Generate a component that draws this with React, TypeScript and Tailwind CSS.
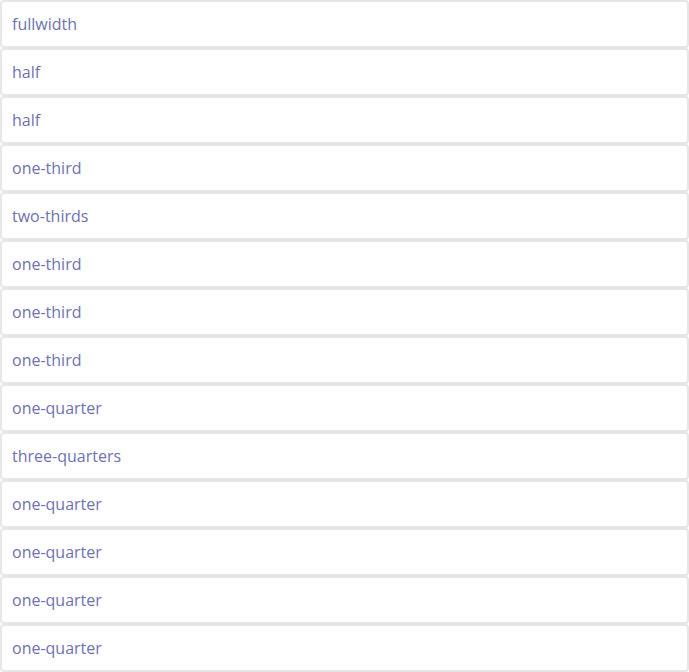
const rows = [
  "fullwidth",
  "half",
  "half",
  "one-third",
  "two-thirds",
  "one-third",
  "one-third",
  "one-third",
  "one-quarter",
  "three-quarters",
  "one-quarter",
  "one-quarter",
  "one-quarter",
  "one-quarter",
];

export default function App() {
  return (
    <div className="w-[689px] bg-white font-['Open_Sans',sans-serif]">
      {rows.map((label, i) => (
        <div
          key={i}
          className="flex h-[48px] items-center rounded-[4px] border-2 border-[#e6e6e6] bg-white px-[10px] text-[16px] text-[#6e72b0]"
        >
          {label}
        </div>
      ))}
    </div>
  );
}
